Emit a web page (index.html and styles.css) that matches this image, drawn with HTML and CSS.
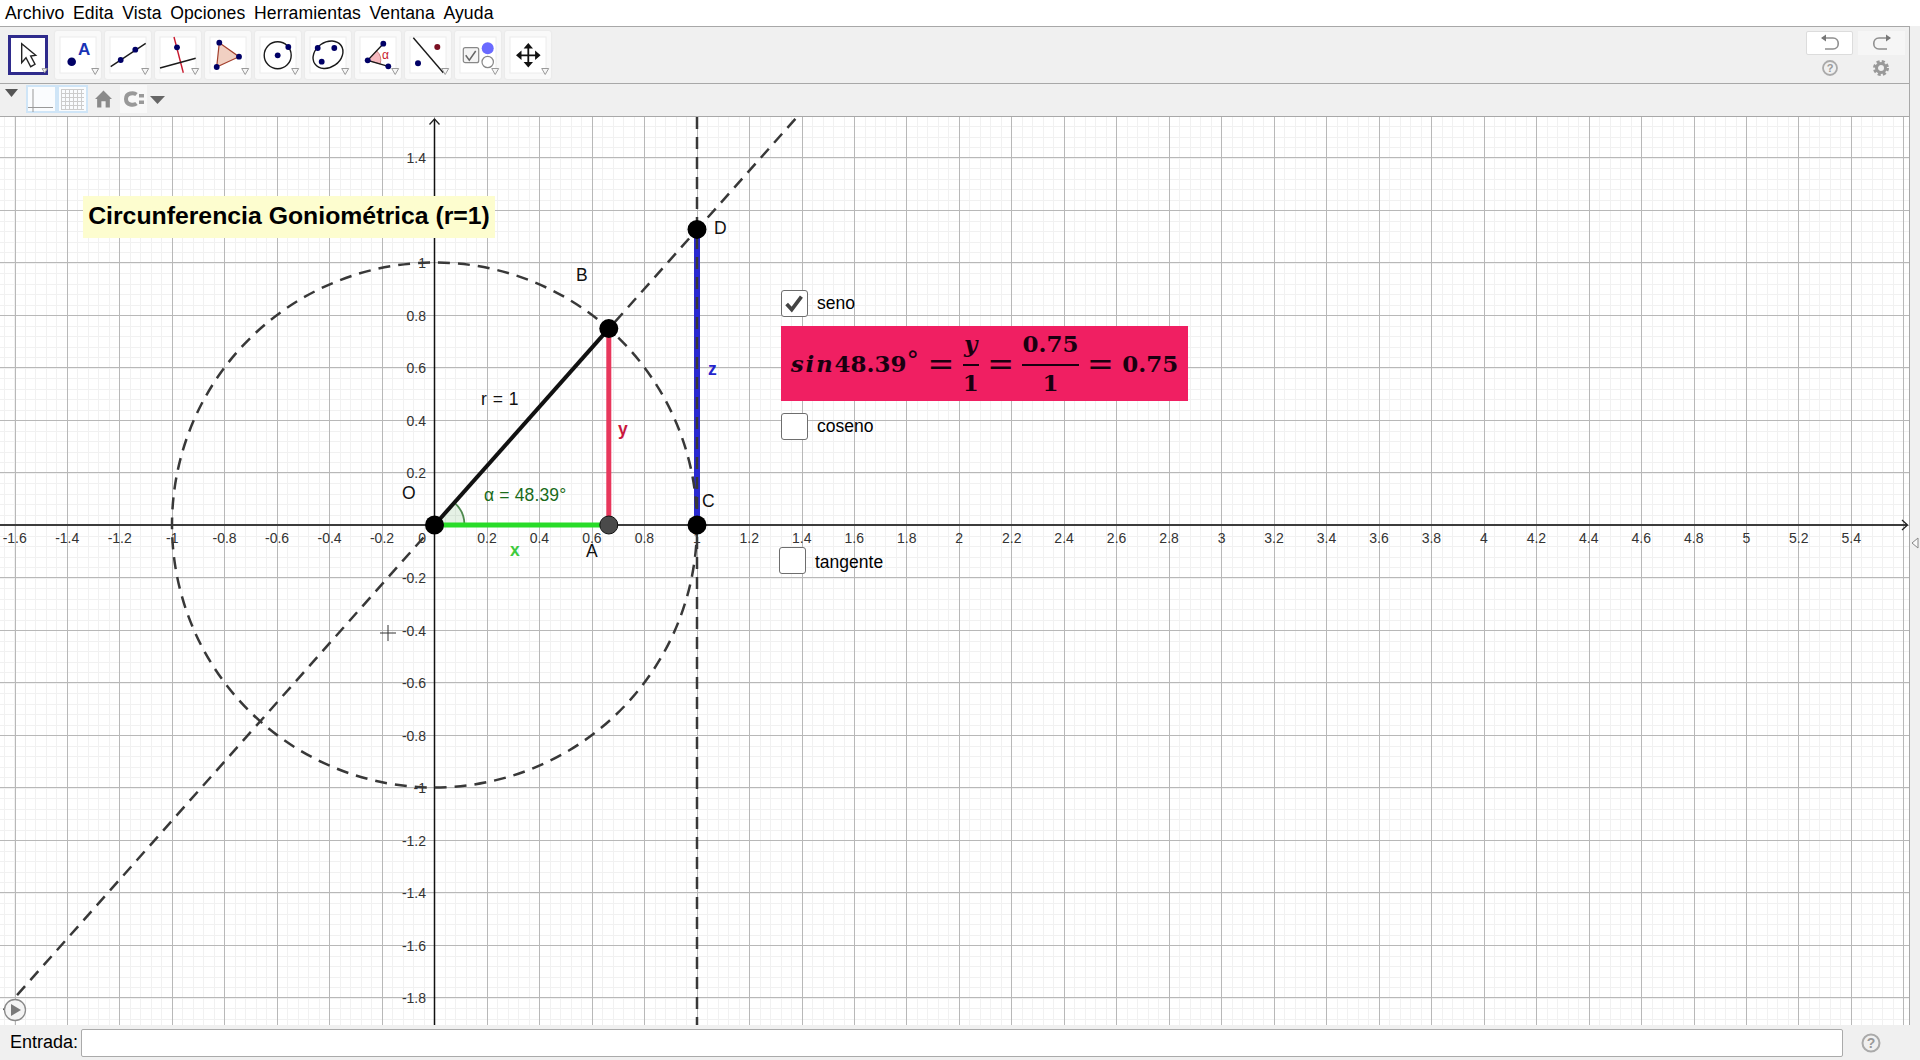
FILE: index.html
```html
<!DOCTYPE html>
<html lang="es">
<head>
<meta charset="utf-8">
<title>Circunferencia Goniométrica</title>
<link rel="stylesheet" href="styles.css">
</head>
<body>
<div class="app">
  <nav class="menubar">
    <span>Archivo</span><span>Edita</span><span>Vista</span><span>Opciones</span><span>Herramientas</span><span>Ventana</span><span>Ayuda</span>
  </nav>
  <div class="workspace">
    <div class="main-col">
      <div class="toolbar">
        <div class="tool-active">
          <svg viewBox="0 0 40 40" width="40" height="40"><path class="cursor-ico" d="M13.700 8.700V27.700L18 22.700L22.700 31.700L27 29.300L22.700 21L27.700 20.300Z"/><path class="mini-tri" d="M34 33.700H39.300L36.700 37.700Z"/></svg>
        </div>
        <div class="tools">
          <div class="tool"><svg viewBox="0 0 46 48" width="46" height="48"><rect class="tool-face" x="5" y="6" width="36" height="36"/><circle class="pt" cx="16.700" cy="30.700" r="4.300"/><text class="ico-a" x="23" y="24">A</text><path class="mini-tri" d="M36.700 37.500H43.700L40.200 43.500Z"/></svg></div>
          <div class="tool"><svg viewBox="0 0 46 48" width="46" height="48"><rect class="tool-face" x="5" y="6" width="36" height="36"/><path class="ln" d="M5.700 35.700L40.700 12.300"/><circle class="pt" cx="15.700" cy="29" r="2.900"/><circle class="pt" cx="30.300" cy="18.700" r="2.900"/><path class="mini-tri" d="M36.700 37.500H43.700L40.200 43.500Z"/></svg></div>
          <div class="tool"><svg viewBox="0 0 46 48" width="46" height="48"><rect class="tool-face" x="5" y="6" width="36" height="36"/><path class="ln-red" d="M19 6L28.300 41.700"/><path class="ln" d="M5 37L40.700 27.300"/><circle class="pt" cx="22" cy="16.300" r="2.900"/><path class="mini-tri" d="M36.700 37.500H43.700L40.200 43.500Z"/></svg></div>
          <div class="tool"><svg viewBox="0 0 46 48" width="46" height="48"><rect class="tool-face" x="5" y="6" width="36" height="36"/><path class="poly" d="M14.300 11.700L34 25.700L11.700 36Z"/><circle class="pt" cx="14.300" cy="11.700" r="2.900"/><circle class="pt" cx="34" cy="25.700" r="2.900"/><circle class="pt" cx="11.700" cy="36" r="2.900"/><path class="mini-tri" d="M36.700 37.500H43.700L40.200 43.500Z"/></svg></div>
          <div class="tool"><svg viewBox="0 0 46 48" width="46" height="48"><rect class="tool-face" x="5" y="6" width="36" height="36"/><circle class="ring" cx="22.700" cy="24.300" r="13.500"/><circle class="pt" cx="22.700" cy="24.300" r="2.900"/><circle class="pt" cx="33.300" cy="16" r="2.900"/><path class="mini-tri" d="M36.700 37.500H43.700L40.200 43.500Z"/></svg></div>
          <div class="tool"><svg viewBox="0 0 46 48" width="46" height="48"><rect class="tool-face" x="5" y="6" width="36" height="36"/><ellipse class="ring" cx="23" cy="23.700" rx="16" ry="12.500" transform="rotate(-35 23 23.700)"/><circle class="pt" cx="12.700" cy="17" r="2.900"/><circle class="pt" cx="29.300" cy="17" r="2.900"/><circle class="pt" cx="16.700" cy="30.700" r="2.900"/><path class="mini-tri" d="M36.700 37.500H43.700L40.200 43.500Z"/></svg></div>
          <div class="tool"><svg viewBox="0 0 46 48" width="46" height="48"><rect class="tool-face" x="5" y="6" width="36" height="36"/><path class="sector" d="M12.700 29.300L21.600 19.800A13 13 0 0 1 25.200 32.900Z"/><path class="ln" d="M28.300 12.700L12.700 29.300L33.300 35.300"/><circle class="pt" cx="12.700" cy="29.300" r="2.900"/><circle class="pt" cx="28.300" cy="12.700" r="2.900"/><circle class="pt" cx="33.300" cy="35.300" r="2.900"/><text class="ico-alpha" x="27" y="28">α</text><path class="mini-tri" d="M36.700 37.500H43.700L40.200 43.500Z"/></svg></div>
          <div class="tool"><svg viewBox="0 0 46 48" width="46" height="48"><rect class="tool-face" x="5" y="6" width="36" height="36"/><path class="ln" d="M8.300 6.700L38.300 41.700"/><circle class="pt-red" cx="32.300" cy="16" r="3"/><circle class="pt" cx="13" cy="32.300" r="3"/><path class="mini-tri" d="M36.700 37.500H43.700L40.200 43.500Z"/></svg></div>
          <div class="tool"><svg viewBox="0 0 46 48" width="46" height="48"><rect class="tool-face" x="5" y="6" width="36" height="36"/><rect class="ico-box" x="8.300" y="16.700" width="15.400" height="15" rx="2"/><path class="ico-check" d="M10.700 24.300L14.300 29.300L20.700 20"/><circle class="blue-dot" cx="32.700" cy="17.300" r="6"/><circle class="open-dot" cx="32.700" cy="31" r="5.700"/><path class="mini-tri" d="M36.700 37.500H43.700L40.200 43.500Z"/></svg></div>
          <div class="tool"><svg viewBox="0 0 46 48" width="46" height="48"><rect class="tool-face" x="5" y="6" width="36" height="36"/><path class="ln-move" d="M14 24.300H33M23.300 15V34"/><path class="arrows" d="M23.300 12L28 17.500H18.600ZM23.300 36.600L28 31.100H18.600ZM11 24.300L16.500 19.600V29ZM35.600 24.300L30.100 19.600V29Z"/><path class="mini-tri" d="M36.700 37.500H43.700L40.200 43.500Z"/></svg></div>
        </div>
        <div class="history">
          <div class="hist-row">
            <div class="hist-btn hist-undo"><svg viewBox="0 0 24 20" width="24" height="20"><path class="hist-ico" d="M4 5H15C22 5 22 16 15 16H7"/><path class="hist-head" d="M3 5L8 1.500V8.500Z"/></svg></div>
            <div class="hist-btn hist-redo"><svg viewBox="0 0 24 20" width="24" height="20"><path class="hist-ico" d="M20 5H9C2 5 2 16 9 16H17"/><path class="hist-head" d="M21 5L16 1.500V8.500Z"/></svg></div>
          </div>
          <div class="hist-row hist-row-small">
            <svg class="hist-small" viewBox="0 0 18 18" width="18" height="18"><circle class="help-ring" cx="9" cy="9" r="7"/><text class="help-q" x="9" y="13">?</text></svg>
            <svg class="hist-small" viewBox="0 0 18 18" width="18" height="18"><circle class="gear-body" cx="9" cy="9" r="4.500"/><circle class="gear-teeth" cx="9" cy="9" r="6.500"/></svg>
          </div>
        </div>
      </div>
      <div class="stylebar">
        <svg class="sb-tri" viewBox="0 0 13 8" width="13" height="8"><path d="M0 0H13L6.500 8Z"/></svg>
        <div class="sb-btn"><svg viewBox="0 0 31 28" width="31" height="28"><path class="axes-ico" d="M7 4V27M2 22.500H27"/></svg></div>
        <div class="sb-btn"><svg viewBox="0 0 31 28" width="31" height="28"><path class="grid-ico" d="M4.500 4V24M8.500 4V24M12.500 4V24M16.500 4V24M20.500 4V24M24.500 4V24M4 4.500H27M4 8.500H27M4 12.500H27M4 16.500H27M4 20.500H27M4 24.500H27"/></svg></div>
        <svg class="sb-home" viewBox="0 0 16 16" width="17" height="18"><path d="M8 0L16 8H14V16H10V10H6V16H2V8H0Z"/></svg>
        <div class="sb-zoom"><svg viewBox="0 0 22 16" width="22" height="16"><path class="zoom-c" d="M13.500 3.500C11 1.500 3 1.500 3 8C3 14.500 11 14.500 13.500 12.500"/><rect class="zoom-dot" x="16" y="3" width="5" height="3.500"/><rect class="zoom-dot" x="16" y="9.500" width="5" height="3.500"/></svg></div>
        <svg class="sb-drop" viewBox="0 0 15 8" width="15" height="8"><path d="M0 0H15L7.500 8Z"/></svg>
      </div>
      <div class="canvas">
        <svg class="plot" viewBox="0 117 1909 908" width="1909" height="908">
          <line class="grid-minor" x1="4" y1="571" x2="1909" y2="571"/>
          <line class="grid-minor-h" x1="954.500" y1="115.500" x2="954.500" y2="1025"/>
          <line class="grid-major" x1="14.500" y1="571" x2="1909" y2="571"/>
          <line class="grid-major-h" x1="954.500" y1="157" x2="954.500" y2="1025"/>
          <line class="axis-x" x1="0" y1="525" x2="1907" y2="525"/>
          <line class="axis-y" x1="434.500" y1="119" x2="434.500" y2="1025"/>
          <path class="axis-arrow" d="M429.500 124.500L434.500 119L439.500 124.500"/>
          <path class="axis-arrow" d="M1902 520L1907.500 525L1902 530"/>

          <g class="tick-x">
            <text x="14.700" y="543">-1.6</text><text x="67.200" y="543">-1.4</text><text x="119.700" y="543">-1.2</text><text x="172.200" y="543">-1</text><text x="224.600" y="543">-0.8</text><text x="277.100" y="543">-0.6</text><text x="329.600" y="543">-0.4</text><text x="382" y="543">-0.2</text>
            <text x="487" y="543">0.2</text><text x="539.400" y="543">0.4</text><text x="591.900" y="543">0.6</text><text x="644.400" y="543">0.8</text><text x="696.900" y="543">1</text><text x="749.300" y="543">1.2</text><text x="801.800" y="543">1.4</text><text x="854.300" y="543">1.6</text><text x="906.700" y="543">1.8</text><text x="959.200" y="543">2</text><text x="1011.700" y="543">2.2</text><text x="1064.100" y="543">2.4</text><text x="1116.600" y="543">2.6</text><text x="1169.100" y="543">2.8</text><text x="1221.600" y="543">3</text><text x="1274" y="543">3.2</text><text x="1326.500" y="543">3.4</text><text x="1379" y="543">3.6</text><text x="1431.400" y="543">3.8</text><text x="1483.900" y="543">4</text><text x="1536.400" y="543">4.2</text><text x="1588.800" y="543">4.4</text><text x="1641.300" y="543">4.6</text><text x="1693.800" y="543">4.8</text><text x="1746.300" y="543">5</text><text x="1798.700" y="543">5.2</text><text x="1851.200" y="543">5.4</text>
          </g>
          <g class="tick-y">
            <text x="426" y="543">0</text>
            <text x="426" y="163">1.4</text><text x="426" y="268">1</text><text x="426" y="321">0.8</text><text x="426" y="373">0.6</text><text x="426" y="426">0.4</text><text x="426" y="478">0.2</text>
            <text x="426" y="583">-0.2</text><text x="426" y="636">-0.4</text><text x="426" y="688">-0.6</text><text x="426" y="741">-0.8</text><text x="426" y="793">-1</text><text x="426" y="846">-1.2</text><text x="426" y="898">-1.4</text><text x="426" y="951">-1.6</text><text x="426" y="1003">-1.8</text>
          </g>

          <path class="angle" d="M434.500 525L464.500 525A30 30 0 0 0 454.400 502.600Z"/>
          <path class="angle-arc" d="M464.500 525A30 30 0 0 0 454.400 502.600"/>
          <line class="seg-z" x1="697" y1="229.400" x2="697" y2="525"/>
          <circle class="dash" cx="434.500" cy="525" r="262.500"/>
          <line class="dash" x1="-9.500" y1="1025" x2="797" y2="117"/>
          <line class="dash" x1="697" y1="117" x2="697" y2="1025"/>
          <line class="seg-x" x1="434.500" y1="525" x2="608.800" y2="525"/>
          <line class="seg-y" x1="608.800" y1="525" x2="608.800" y2="328.600"/>
          <line class="seg-r" x1="434.500" y1="525" x2="608.800" y2="328.600"/>

          <circle class="point" cx="434.500" cy="525" r="9.500"/>
          <circle class="point point-a" cx="608.800" cy="525" r="9"/>
          <circle class="point" cx="697" cy="525" r="9.500"/>
          <circle class="point" cx="608.800" cy="328.600" r="9.500"/>
          <circle class="point" cx="697" cy="229.400" r="9.500"/>

          <g class="obj-label">
            <text x="402" y="499">O</text><text x="586" y="557">A</text><text x="702" y="507">C</text><text x="576" y="281">B</text><text x="714" y="234">D</text><text class="r-label" x="481" y="405">r = 1</text>
          </g>
          <text class="lbl-x" x="510" y="556">x</text>
          <text class="lbl-y" x="618" y="435">y</text>
          <text class="lbl-z" x="708" y="375">z</text>
          <text class="lbl-angle" x="484" y="501">α = 48.39°</text>

          <path class="crosshair" d="M380 633H396M388 625V641"/>
          <circle class="play-ring" cx="15" cy="1010" r="10.500"/>
          <path class="play-tri" d="M11 1004L21 1010L11 1016Z"/>
        </svg>

        <div class="title-box">Circunferencia Goniométrica (r=1)</div>

        <label class="check check-seno"><span class="box"><svg viewBox="0 0 27 27" width="25" height="25"><path d="M5 14L10.500 20L21 6"/></svg></span><span class="check-label">seno</span></label>
        <div class="formula">
          <span class="f-it f-sin">sin</span><span>48.39<sup class="deg">°</sup></span>
          <span class="f-eq">=</span>
          <span class="frac"><span class="f-it frac-num">y</span><span class="frac-den">1</span></span>
          <span class="f-eq">=</span>
          <span class="frac"><span class="frac-num">0.75</span><span class="frac-den">1</span></span>
          <span class="f-eq">=</span>
          <span>0.75</span>
        </div>
        <label class="check check-coseno"><span class="box"></span><span class="check-label">coseno</span></label>
        <label class="check check-tangente"><span class="box"></span><span class="check-label">tangente</span></label>
      </div>
    </div>
    <div class="side-strip">
      <svg viewBox="0 0 8 12" width="8" height="12"><path d="M7 1L1 6L7 11Z"/></svg>
    </div>
  </div>
  <div class="inputbar">
    <span class="input-label">Entrada:</span>
    <div class="input-field"></div>
    <svg class="input-help" viewBox="0 0 20 20" width="20" height="20"><circle class="help-ring-lg" cx="10" cy="10" r="8.500"/><text class="help-q-lg" x="10" y="15">?</text></svg>
  </div>
</div>
</body>
</html>
```
FILE: styles.css
```css
* { box-sizing: border-box; }
html, body { margin: 0; height: 100%; overflow: hidden; }
body { font-family: "Liberation Sans", Arial, sans-serif; color: #000; background: #fff; }
svg { display: block; }

.app { display: flex; flex-direction: column; width: 1920px; height: 1060px; }

.menubar { flex: none; height: 26px; display: flex; align-items: center; gap: 8.500px; padding-left: 5px; font-size: 17.600px; letter-spacing: 0.120px; background: #fff; }

.workspace { flex: none; height: 999px; display: flex; }
.main-col { flex: none; width: 1910px; display: flex; flex-direction: column; border-right: 1px solid #a8a8a8; }
.side-strip { flex: 1; background: #f0f0f0; display: flex; align-items: flex-start; justify-content: center; padding-top: 511px; }
.side-strip path { fill: #fafafa; stroke: #888; stroke-width: 1; }

.toolbar { flex: none; height: 58px; display: flex; border-top: 1px solid #a8a8a8; border-bottom: 1px solid #a8a8a8; background: #f0f0f0; padding: 4px 0 0 8px; }
.tools { display: flex; gap: 4px; margin-left: 7px; }
.tool { width: 46px; height: 48px; background: #f9f9f9; border-radius: 2px; box-shadow: 0 0 2px #dcdcdc; }
.tool-face { fill: #fff; stroke: #ececec; stroke-width: 1; }
.tool-active { width: 40px; height: 40px; margin-top: 4px; background: #fff; box-shadow: inset 0 0 0 3px #2f2b8c; }
.cursor-ico { fill: #fff; stroke: #222; stroke-width: 1.400; }
.mini-tri { fill: #f6f6f6; stroke: #9a9a9a; stroke-width: 1; }
.pt { fill: #000066; }
.pt-red { fill: #7a0f22; }
.ln { fill: none; stroke: #1a1a1a; stroke-width: 1.400; }
.ln-move { fill: none; stroke: #111; stroke-width: 1.800; }
.ln-red { fill: none; stroke: #c8192e; stroke-width: 1.400; }
.poly { fill: #f1d0c2; stroke: #a3402e; stroke-width: 1.200; }
.ring { fill: none; stroke: #1a1a1a; stroke-width: 1.400; }
.sector { fill: #f7b9bf; stroke: #c46a6a; stroke-width: 0.800; }
.ico-a { font-size: 17px; font-weight: 700; fill: #1a33b5; }
.ico-alpha { font-size: 12px; fill: #c8192e; }
.ico-box { fill: #f4f4f4; stroke: #888; stroke-width: 1.200; }
.ico-check { fill: none; stroke: #666; stroke-width: 1.500; }
.blue-dot { fill: #6a6aff; }
.open-dot { fill: #fff; stroke: #888; stroke-width: 1.200; }
.arrows { fill: #111; }

.history { margin-left: auto; width: 100px; margin-right: 3px; display: flex; flex-direction: column; }
.hist-row { display: flex; gap: 5px; }
.hist-btn { width: 47px; height: 24px; display: flex; align-items: center; justify-content: center; }
.hist-undo { background: #fff; border: 1px solid #dcdcdc; border-radius: 2px; }
.hist-redo { background: #f6f6f6; }
.hist-ico { fill: none; stroke: #8f8f8f; stroke-width: 1.600; }
.hist-head { fill: #777; }
.hist-row-small { margin-top: 4px; gap: 33px; padding-left: 15px; }
.help-ring { fill: none; stroke: #aaa; stroke-width: 1.800; }
.help-q { font-size: 11px; font-weight: 700; fill: #999; text-anchor: middle; }
.gear-body { fill: none; stroke: #999; stroke-width: 3; }
.gear-teeth { fill: none; stroke: #999; stroke-width: 3; stroke-dasharray: 3 2.100; }

.stylebar { flex: none; height: 33px; display: flex; align-items: flex-start; background: #f0f0f0; border-bottom: 1px solid #a8a8a8; }
.sb-tri { margin: 5px 0 0 5px; fill: #555; }
.sb-btn { width: 31px; height: 28px; margin-top: 1px; background: #fafcfe; box-shadow: inset 0 0 0 2px #cfe5f7; }
.sb-btn:first-of-type { margin-left: 8px; }
.axes-ico { fill: none; stroke: #999; stroke-width: 1; }
.grid-ico { fill: none; stroke: #ccc; stroke-width: 1; }
.sb-home { margin: 6px 0 0 7px; fill: #8a8a8a; }
.sb-zoom { width: 27px; height: 28px; margin: 1px 0 0 8px; background: #f8f8f8; display: flex; align-items: center; justify-content: center; }
.zoom-c { fill: none; stroke: #999; stroke-width: 4; }
.zoom-dot { fill: #999; }
.sb-drop { margin: 12px 0 0 3px; fill: #666; }

.canvas { flex: 1; position: relative; background: #fff; overflow: hidden; }
.plot { position: absolute; left: 0; top: 0; }
.grid-minor { stroke: #f1f1f1; stroke-width: 908; stroke-dasharray: 1 9.494; shape-rendering: crispEdges; }
.grid-minor-h { stroke: #f1f1f1; stroke-width: 1909; stroke-dasharray: 1 9.500; shape-rendering: crispEdges; }
.grid-major { stroke: #b8b8b8; stroke-width: 908; stroke-dasharray: 1 51.470; shape-rendering: crispEdges; }
.grid-major-h { stroke: #b8b8b8; stroke-width: 1909; stroke-dasharray: 1 51.500; shape-rendering: crispEdges; }
.axis-x { stroke: #3c3c3c; stroke-width: 2; }
.axis-y { stroke: #111; stroke-width: 1.500; }
.axis-arrow { fill: none; stroke: #222; stroke-width: 1.300; }
.tick-x text { font-size: 14px; fill: #333; text-anchor: middle; }
.tick-y text { font-size: 14px; fill: #333; text-anchor: end; }
.angle { fill: rgba(0, 120, 0, 0.1); stroke: none; }
.angle-arc { fill: none; stroke: #4f8a4f; stroke-width: 1.800; }
.dash { fill: none; stroke: #383838; stroke-width: 2.500; stroke-dasharray: 12 8; }
.seg-z { stroke: #2a2ad0; stroke-width: 6; }
.seg-x { stroke: #28dc28; stroke-width: 5; }
.seg-y { stroke: #e8375c; stroke-width: 5; }
.seg-r { stroke: #111; stroke-width: 4; }
.point { fill: #000; }
.point-a { fill: #4a4a4a; stroke: #111; stroke-width: 1; }
.obj-label text { font-size: 17.500px; fill: #111; }
.r-label { word-spacing: 1px; }
.lbl-x { font-size: 17.500px; font-weight: 700; fill: #3ecb3e; }
.lbl-y { font-size: 17.500px; font-weight: 700; fill: #c9173e; }
.lbl-z { font-size: 17.500px; font-weight: 700; fill: #2424cc; }
.lbl-angle { font-size: 17.500px; letter-spacing: 0.150px; fill: #1a6b1a; }
.crosshair { fill: none; stroke: #333; stroke-width: 1; }
.play-ring { fill: #f4f4f4; stroke: #8a8a8a; stroke-width: 1.300; }
.play-tri { fill: #7a7a7a; }

.title-box { position: absolute; left: 83px; top: 79px; width: 412px; height: 42px; padding-bottom: 2px; display: flex; align-items: center; justify-content: center; background: #fdfdcf; font-size: 24.800px; font-weight: 700; color: #000; white-space: nowrap; }

.check { position: absolute; display: flex; align-items: center; gap: 9px; font-size: 17.500px; }
.check-seno { left: 781px; top: 173px; }
.check-coseno { left: 781px; top: 296px; }
.check-tangente { left: 779px; top: 430px; }
.check-tangente .check-label { margin-top: 4px; }
.box { width: 27px; height: 27px; background: #fff; border: 1.500px solid #6e6e6e; border-radius: 3px; display: block; }
.box path { fill: none; stroke: #444; stroke-width: 4; }

.formula { position: absolute; left: 781px; top: 209px; width: 407px; height: 75px; background: #f01f62; display: flex; align-items: center; justify-content: center; font-family: "DejaVu Serif", "Liberation Serif", serif; font-weight: 700; font-size: 23px; color: #1a0010; white-space: nowrap; }
.f-it { font-style: italic; }
.f-sin { letter-spacing: 1.800px; }
.f-eq { width: 22.700px; margin: 0 10.500px; display: flex; justify-content: center; font-size: 32px; font-weight: 400; line-height: 1; }
.deg { font-size: 25px; font-weight: 400; vertical-align: 3px; line-height: 0; }
.frac { display: flex; flex-direction: column; align-items: center; }
.frac-num { line-height: 28px; padding-bottom: 6px; }
.frac-den { border-top: 2px solid #1a0010; align-self: stretch; text-align: center; line-height: 30px; padding-top: 2px; }

.inputbar { flex: none; height: 35px; display: flex; align-items: center; background: #f0f0f0; padding-left: 10px; }
.input-label { font-size: 18px; width: 71px; white-space: nowrap; }
.input-field { width: 1762px; height: 28px; background: #fff; border: 1px solid #aaa; border-radius: 2px; }
.input-help { margin-left: 18px; }
.help-ring-lg { fill: none; stroke: #aaa; stroke-width: 2; }
.help-q-lg { font-size: 14px; font-weight: 700; fill: #999; text-anchor: middle; }
```
